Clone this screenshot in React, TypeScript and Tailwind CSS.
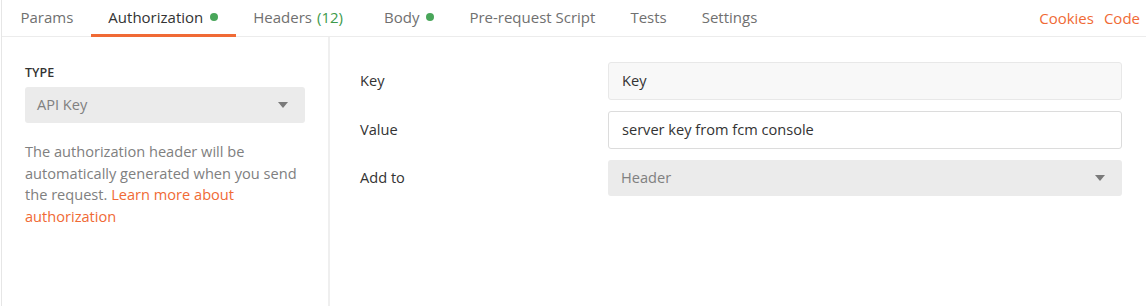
import { ReactNode } from "react";

const font = { fontFamily: "'Open Sans', 'Liberation Sans', sans-serif" };

function Dot() {
  return <span className="ml-[7px] inline-block h-[8px] w-[8px] rounded-full bg-[#49a65a]" />;
}

function Tab({ children, active }: { children: ReactNode; active?: boolean }) {
  return (
    <div
      className={
        "flex h-[37px] items-center border-b-[3px] px-[17.5px] text-[15px] " +
        (active ? "border-[#f06a35] text-[#333333]" : "border-transparent text-[#707070]")
      }
    >
      {children}
    </div>
  );
}

function Caret() {
  return (
    <svg width="10" height="6" viewBox="0 0 10 6" className="shrink-0">
      <path d="M0 0h10L5 6z" fill="#7a7a7a" />
    </svg>
  );
}

function App() {
  return (
    <div
      className="ml-px flex h-[306px] w-[1145px] flex-col border-l border-[#e6e6e6] bg-white"
      style={font}
    >
      {/* tabs */}
      <div className="flex h-[37px] items-stretch border-b border-[#ececec] pl-px">
        <div className="-mb-px flex">
          <Tab>Params</Tab>
          <Tab active>
            Authorization
            <Dot />
          </Tab>
          <Tab>
            Headers <span className="ml-[5px] text-[#3d9a4b]">(12)</span>
            <span className="w-[6px]" />
          </Tab>
          <Tab>
            Body
            <Dot />
          </Tab>
          <Tab>Pre-request Script</Tab>
          <Tab>Tests</Tab>
          <Tab>Settings</Tab>
        </div>
        <div className="ml-auto flex items-center gap-[10px] pr-[6px] text-[15px] text-[#f06a35]">
          <span>Cookies</span>
          <span>Code</span>
        </div>
      </div>

      <div className="flex flex-1">
        {/* left: auth type */}
        <div className="w-[328px] shrink-0 border-r-2 border-[#efefef] pl-[23px] pr-[24px] pt-[28px]">
          <p className="h-[16px] text-[12.5px] font-semibold leading-[16px] text-[#333333]">TYPE</p>
          <div className="mt-[6px] flex h-[36px] w-[280px] items-center justify-between rounded-[3px] bg-[#ebebeb] pl-[12px] pr-[17px] text-[14.6px] text-[#808080]">
            <span>API Key</span>
            <Caret />
          </div>
          <p className="mt-[18px] w-[280px] text-[14.6px] leading-[21.7px] text-[#808080]">
            The authorization header will be automatically generated when you send the request.{" "}
            <span className="text-[#f06a35]">Learn more about authorization</span>
          </p>
        </div>

        {/* right: key/value */}
        <div className="flex-1 pl-[30px] pr-[24px] pt-[25px]">
          <div className="grid grid-cols-[248px_1fr] gap-y-[11px] text-[14.6px]">
            <div className="flex h-[38px] items-center text-[#333333]">Key</div>
            <div className="flex h-[38px] items-center rounded-[3px] border border-[#e8e8e8] bg-[#f8f8f8] px-[13px] text-[#333333]">
              Key
            </div>
            <div className="flex h-[38px] items-center text-[#333333]">Value</div>
            <div className="flex h-[38px] items-center rounded-[3px] border border-[#dcdcdc] bg-white px-[13px] text-[#333333]">
              server key from fcm console
            </div>
            <div className="flex h-[36px] items-center text-[#333333]">Add to</div>
            <div className="flex h-[36px] items-center justify-between rounded-[3px] bg-[#ebebeb] pl-[13px] pr-[17px] text-[#808080]">
              <span>Header</span>
              <Caret />
            </div>
          </div>
        </div>
      </div>
    </div>
  );
}

export default App;
